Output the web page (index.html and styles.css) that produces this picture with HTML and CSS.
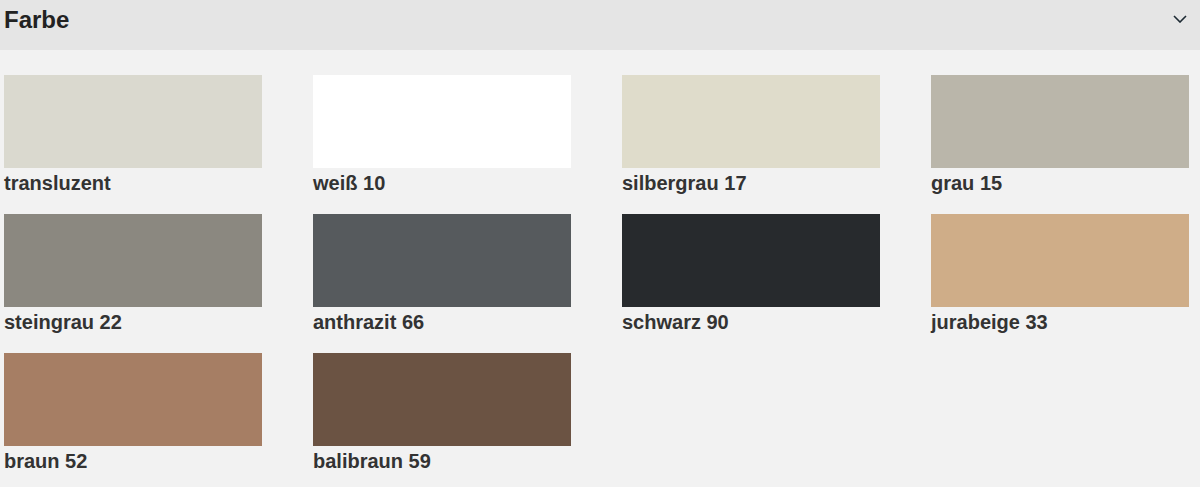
FILE: index.html
```html
<!DOCTYPE html>
<html lang="de">
<head>
    <meta charset="UTF-8">
    <title>Farbe</title>
    <link rel="stylesheet" href="styles.css">
</head>
<body>

    <div class="panel">
        <div class="panel-header">
            <h2>Farbe</h2>
            <svg class="chevron" width="14" height="8" viewBox="0 0 14 8">
                <path d="M1 1 L7 7 L13 1" fill="none" stroke="#1d2a33" stroke-width="1.6"/>
            </svg>
        </div>

        <div class="swatch-grid">
            <div class="swatch">
                <div class="swatch-color c-transluzent"></div>
                <span class="swatch-name">transluzent</span>
            </div>
            <div class="swatch">
                <div class="swatch-color c-weiss"></div>
                <span class="swatch-name">weiß 10</span>
            </div>
            <div class="swatch">
                <div class="swatch-color c-silbergrau"></div>
                <span class="swatch-name">silbergrau 17</span>
            </div>
            <div class="swatch">
                <div class="swatch-color c-grau"></div>
                <span class="swatch-name">grau 15</span>
            </div>
            <div class="swatch">
                <div class="swatch-color c-steingrau"></div>
                <span class="swatch-name">steingrau 22</span>
            </div>
            <div class="swatch">
                <div class="swatch-color c-anthrazit"></div>
                <span class="swatch-name">anthrazit 66</span>
            </div>
            <div class="swatch">
                <div class="swatch-color c-schwarz"></div>
                <span class="swatch-name">schwarz 90</span>
            </div>
            <div class="swatch">
                <div class="swatch-color c-jurabeige"></div>
                <span class="swatch-name">jurabeige 33</span>
            </div>
            <div class="swatch">
                <div class="swatch-color c-braun"></div>
                <span class="swatch-name">braun 52</span>
            </div>
            <div class="swatch">
                <div class="swatch-color c-balibraun"></div>
                <span class="swatch-name">balibraun 59</span>
            </div>
        </div>
    </div>

</body>
</html>
```

FILE: styles.css
```css
body {
    margin: 0;
    padding: 0;
    background-color: #f2f2f2;
    font-family: 'Liberation Sans', Arial, sans-serif;
    color: #333;
}

.panel-header {
    display: flex;
    justify-content: space-between;
    align-items: center;
    height: 50px;
    box-sizing: border-box;
    padding: 0 13px 0 4px;
    background-color: #e5e5e5;
}

.panel-header h2 {
    margin: 0 0 11px;
    font-size: 24px;
    font-weight: 700;
    color: #222;
}

.chevron {
    margin-bottom: 12px;
}

.swatch-grid {
    display: grid;
    grid-template-columns: repeat(4, 258px);
    column-gap: 51px;
    row-gap: 19px;
    padding: 25px 4px;
}

.swatch {
    display: flex;
    flex-direction: column;
}

.swatch-color {
    height: 93px;
}

.swatch-name {
    margin-top: 3px;
    font-size: 20px;
    line-height: 24px;
    font-weight: 700;
    color: #333;
}

/* Farbtöne */
.c-transluzent { background-color: #dad9cf; }
.c-weiss { background-color: #ffffff; }
.c-silbergrau { background-color: #dfdccb; }
.c-grau { background-color: #bab6aa; }
.c-steingrau { background-color: #8b8880; }
.c-anthrazit { background-color: #565a5d; }
.c-schwarz { background-color: #272a2d; }
.c-jurabeige { background-color: #cfad88; }
.c-braun { background-color: #a67e64; }
.c-balibraun { background-color: #6b5343; }
```
